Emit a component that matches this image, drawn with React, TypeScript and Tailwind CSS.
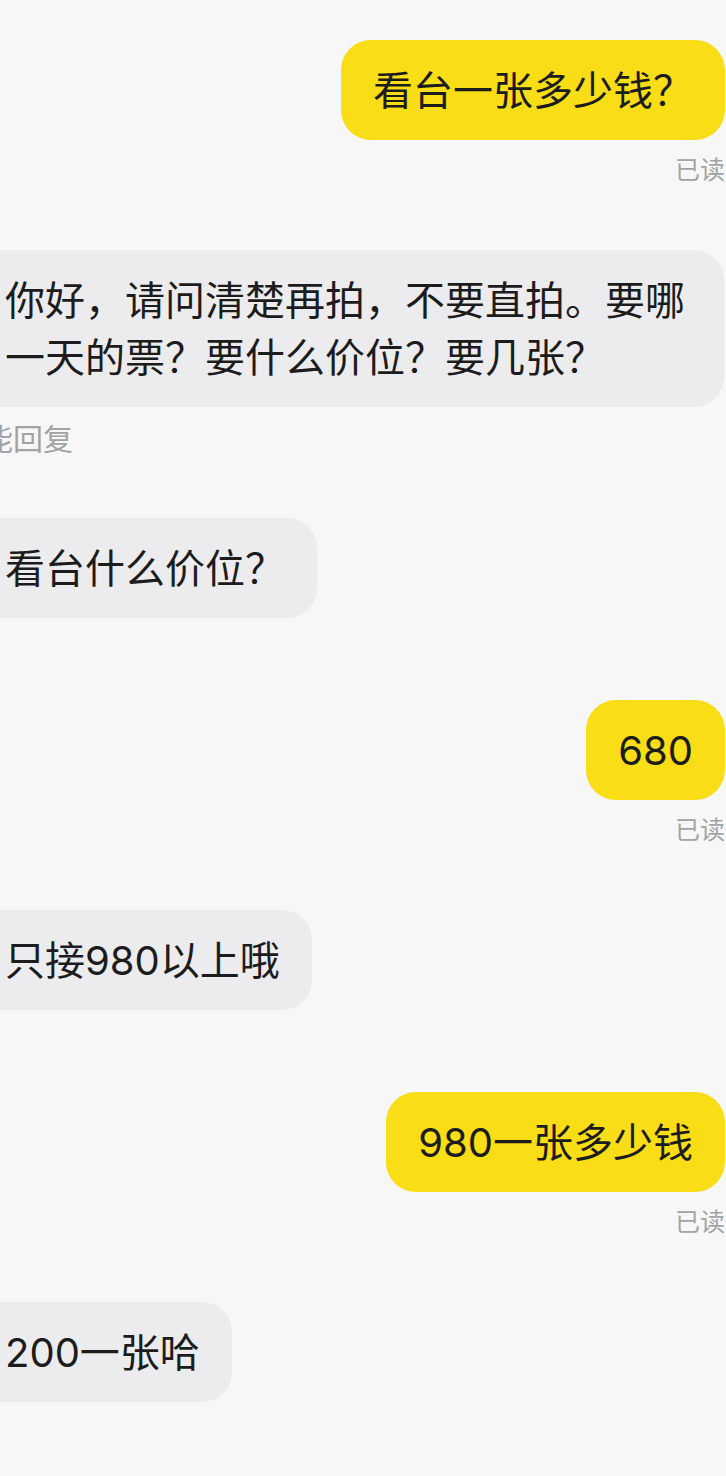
type Msg = {
  side: "left" | "right";
  text: string;
  label?: string;
};

const messages: Msg[] = [
  { side: "right", text: "看台一张多少钱？", label: "已读" },
  {
    side: "left",
    text: "你好，请问清楚再拍，不要直拍。要哪一天的票？要什么价位？要几张？",
    label: "能回复",
  },
  { side: "left", text: "看台什么价位？" },
  { side: "right", text: "680", label: "已读" },
  { side: "left", text: "只接980以上哦" },
  { side: "right", text: "980一张多少钱", label: "已读" },
  { side: "left", text: "200一张哈" },
];

function Message({ msg }: { msg: Msg }) {
  const isRight = msg.side === "right";
  return (
    <div className={isRight ? "flex flex-col items-end mr-[1px]" : "flex flex-col items-start -ml-[27px]"}>
      <div
        className={
          isRight
            ? "rounded-[30px] bg-[#f8dd17] px-8 py-[21.5px] text-[40px] leading-[57px] text-[#1c1c1c]"
            : "max-w-[751px] rounded-[30px] bg-[#ececee] px-8 py-[21.5px] text-[40px] leading-[57px] text-[#1c1c1c]"
        }
      >
        {msg.text}
      </div>
      {msg.label ? (
        <div
          className={
            isRight
              ? "mt-[18px] mb-[67px] text-[25px] leading-[25px] text-[#a3a3a3]"
              : "mt-[17px] mb-[64px] ml-[10px] text-[30px] leading-[30px] text-[#a3a3a3]"
          }
        >
          {msg.label}
        </div>
      ) : (
        <div className="mb-[82px]" />
      )}
    </div>
  );
}

export default function App() {
  return (
    <main className="min-h-[1476px] w-full overflow-hidden bg-[#f7f7f7] pt-[40px] font-['Inter','Noto_Sans_CJK_SC',sans-serif]">
      <div className="flex flex-col">
        {messages.map((m, i) => (
          <Message key={i} msg={m} />
        ))}
      </div>
    </main>
  );
}
